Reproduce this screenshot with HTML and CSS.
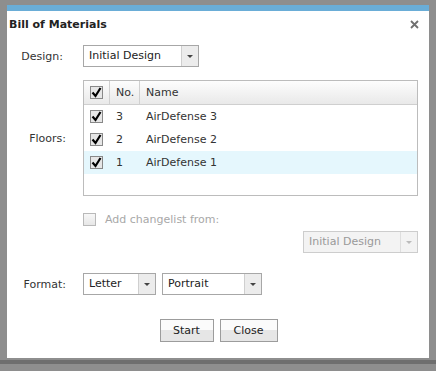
FILE: index.html
```html
<!DOCTYPE html>
<html lang="en">
<head>
    <meta charset="UTF-8">
    <title>Bill of Materials</title>
    <link rel="stylesheet" href="styles.css">
</head>
<body>

<div class="dialog">
    <div class="title-bar">
        <span class="title">Bill of Materials</span>
        <svg class="close" width="9" height="9" viewBox="0 0 9 9"><path d="M1 1 L8 8 M8 1 L1 8" stroke="#707070" stroke-width="1.8"/></svg>
    </div>

    <div class="row design-row">
        <label class="row-label">Design:</label>
        <div class="select w-design">
            <span class="value">Initial Design</span>
            <span class="arrow"></span>
        </div>
    </div>

    <div class="row floors-row">
        <label class="row-label">Floors:</label>
        <div class="grid">
            <div class="grid-head">
                <div class="col-check"><svg class="cb" width="13" height="13" viewBox="0 0 13 13"><rect x="0.5" y="0.5" width="12" height="12" fill="#e6e6e6" stroke="#888"/><path d="M2.5 6.5 L5.5 10 L10.5 2" fill="none" stroke="#000" stroke-width="2.2"/></svg></div>
                <div class="col-no">No.</div>
                <div class="col-name">Name</div>
            </div>
            <div class="grid-row">
                <div class="col-check"><svg class="cb" width="13" height="13" viewBox="0 0 13 13"><rect x="0.5" y="0.5" width="12" height="12" fill="#e6e6e6" stroke="#888"/><path d="M2.5 6.5 L5.5 10 L10.5 2" fill="none" stroke="#000" stroke-width="2.2"/></svg></div>
                <div class="col-no">3</div>
                <div class="col-name">AirDefense 3</div>
            </div>
            <div class="grid-row">
                <div class="col-check"><svg class="cb" width="13" height="13" viewBox="0 0 13 13"><rect x="0.5" y="0.5" width="12" height="12" fill="#e6e6e6" stroke="#888"/><path d="M2.5 6.5 L5.5 10 L10.5 2" fill="none" stroke="#000" stroke-width="2.2"/></svg></div>
                <div class="col-no">2</div>
                <div class="col-name">AirDefense 2</div>
            </div>
            <div class="grid-row selected">
                <div class="col-check"><svg class="cb" width="13" height="13" viewBox="0 0 13 13"><rect x="0.5" y="0.5" width="12" height="12" fill="#e6e6e6" stroke="#888"/><path d="M2.5 6.5 L5.5 10 L10.5 2" fill="none" stroke="#000" stroke-width="2.2"/></svg></div>
                <div class="col-no">1</div>
                <div class="col-name">AirDefense 1</div>
            </div>
        </div>
    </div>

    <div class="changelist">
        <span class="cb-empty"></span>
        <span class="changelist-text">Add changelist from:</span>
    </div>

    <div class="changelist-select">
        <div class="select disabled w-change">
            <span class="value">Initial Design</span>
            <span class="arrow"></span>
        </div>
    </div>

    <div class="row format-row">
        <label class="row-label">Format:</label>
        <div class="select w-letter">
            <span class="value">Letter</span>
            <span class="arrow"></span>
        </div>
        <div class="select w-portrait">
            <span class="value">Portrait</span>
            <span class="arrow"></span>
        </div>
    </div>

    <div class="buttons">
        <button class="btn w-start">Start</button>
        <button class="btn w-close">Close</button>
    </div>
</div>

<div class="backdrop-strip"></div>

</body>
</html>
```

FILE: styles.css
```css
body {
    margin: 0;
    background-color: #8e8e8e;
    font-family: "DejaVu Sans", Verdana, sans-serif;
    font-size: 11px;
    color: #333;
    height: 371px;
    overflow: hidden;
}
.dialog {
    margin: 5px 0 0 7px;
    width: 422px;
    height: 353px;
    box-sizing: border-box;
    background: #fff;
    border-top: 6px solid #6aadd7;
}
.title-bar {
    display: flex;
    justify-content: space-between;
    align-items: center;
    height: 27px;
    padding: 0 10px 0 2px;
}
.title {
    font-weight: bold;
    color: #222;
}
.close {
    display: block;
}
.row {
    display: flex;
    align-items: center;
    gap: 17px;
    padding-right: 11px;
}
.row-label {
    width: 59px;
    text-align: right;
}
.design-row {
    margin-top: 7px;
}
.design-row .row-label {
    width: 56px;
    margin-right: 3px;
}
.floors-row {
    margin-top: 13px;
}
.format-row {
    margin-top: 20px;
    gap: 6px;
}
.format-row .row-label {
    margin-right: 11px;
}
.select {
    display: flex;
    height: 22px;
    box-sizing: border-box;
    border: 1px solid #a7a7a7;
    background: #fff;
}
.select .value {
    flex: 1;
    padding-left: 5px;
    line-height: 20px;
    color: #222;
}
.select .arrow {
    width: 16px;
    border-left: 1px solid #cfcfcf;
    background: #ececec;
    position: relative;
}
.select .arrow::after {
    content: "";
    position: absolute;
    left: 5px;
    top: 9px;
    border-width: 3px 3px 0 3px;
    border-style: solid;
    border-color: #444 transparent transparent transparent;
}
.select.disabled {
    background: #f3f3f3;
    border-color: #cdcdcd;
}
.select.disabled .value {
    color: #999;
}
.select.disabled .arrow {
    background: #f3f3f3;
    border-left-color: #dedede;
}
.select.disabled .arrow::after {
    border-top-color: #bbb;
}
.w-design { width: 116px; }
.w-letter { width: 73px; }
.w-portrait { width: 100px; }
.w-change { width: 115px; }
.grid {
    flex: 1;
    height: 116px;
    box-sizing: border-box;
    border: 1px solid #bcbcbc;
}
.grid-head, .grid-row {
    display: flex;
    height: 23px;
    align-items: center;
}
.grid-head {
    height: 23px;
    border-bottom: 1px solid #cfcfcf;
    background: linear-gradient(#fdfdfd, #e9e9e9);
    align-items: stretch;
}
.grid-head > div {
    display: flex;
    align-items: center;
}
.grid-head .col-check, .grid-head .col-no {
    border-right: 1px solid #d0d0d0;
}
.grid-row.selected {
    background: #e5f7fd;
}
.col-check {
    width: 26px;
    padding-left: 6px;
    box-sizing: border-box;
    display: flex;
    align-items: center;
}
.col-no {
    width: 30px;
    padding-left: 6px;
    box-sizing: border-box;
}
.col-name {
    padding-left: 6px;
}
.cb {
    display: block;
}
.changelist {
    display: flex;
    align-items: center;
    margin: 17px 0 0 76px;
    height: 13px;
}
.cb-empty {
    width: 13px;
    height: 13px;
    box-sizing: border-box;
    border: 1px solid #b9b9b9;
    background: linear-gradient(#f7f7f7, #e7e7e7);
}
.changelist-text {
    margin-left: 9px;
    color: #a8a8a8;
}
.changelist-select {
    display: flex;
    justify-content: flex-end;
    margin-top: 5px;
    padding-right: 11px;
}
.buttons {
    display: flex;
    justify-content: center;
    gap: 6px;
    margin-top: 24px;
    padding-left: 1px;
}
.btn {
    height: 23px;
    border: 1px solid #9c9c9c;
    background: linear-gradient(#fbfbfb 50%, #e6e6e6 50%);
    font-family: "DejaVu Sans", Verdana, sans-serif;
    font-size: 11px;
    color: #222;
    padding: 0;
}
.w-start { width: 54px; }
.w-close { width: 58px; }
.backdrop-strip {
    height: 4px;
    margin-top: 2px;
    background: #6e6e6e;
}
```
